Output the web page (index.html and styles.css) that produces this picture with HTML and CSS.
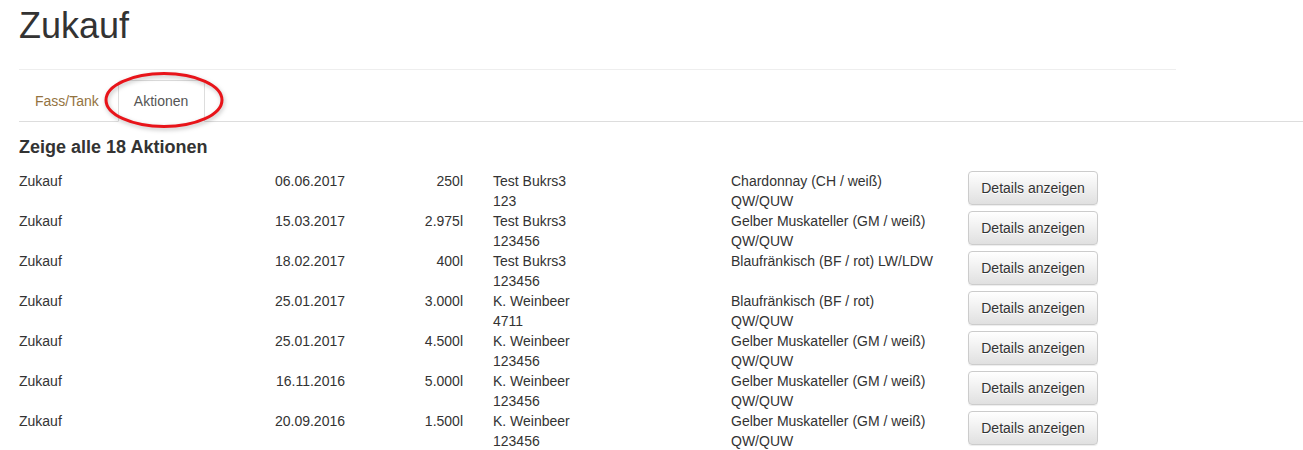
FILE: index.html
```html
<!DOCTYPE html>
<html lang="de">
<head>
<meta charset="utf-8">
<title>Zukauf</title>
<link rel="stylesheet" href="styles.css">
</head>
<body>
<div class="page">
  <div class="page-header"><h1>Zukauf</h1></div>
  <ul class="tabs">
    <li><a class="tab" href="#">Fass/Tank</a></li>
    <li class="active-wrap"><a class="tab active" href="#">Aktionen</a>
      <svg class="marker" width="124" height="62" viewBox="0 0 124 62"><ellipse cx="62" cy="31" rx="58" ry="26.5" fill="none" stroke="#e8141a" stroke-width="3"/></svg>
    </li>
  </ul>
  <h4 class="count">Zeige alle 18 Aktionen</h4>
  <div class="list">
    <div class="row"><div>Zukauf</div><div class="r">06.06.2017</div><div class="r">250l</div><div class="name">Test Bukrs3<br>123</div><div>Chardonnay (CH / weiß)<br>QW/QUW</div><div><button class="btn">Details anzeigen</button></div></div>
    <div class="row"><div>Zukauf</div><div class="r">15.03.2017</div><div class="r">2.975l</div><div class="name">Test Bukrs3<br>123456</div><div>Gelber Muskateller (GM / weiß)<br>QW/QUW</div><div><button class="btn">Details anzeigen</button></div></div>
    <div class="row"><div>Zukauf</div><div class="r">18.02.2017</div><div class="r">400l</div><div class="name">Test Bukrs3<br>123456</div><div>Blaufränkisch (BF / rot) LW/LDW</div><div><button class="btn">Details anzeigen</button></div></div>
    <div class="row"><div>Zukauf</div><div class="r">25.01.2017</div><div class="r">3.000l</div><div class="name">K. Weinbeer<br>4711</div><div>Blaufränkisch (BF / rot)<br>QW/QUW</div><div><button class="btn">Details anzeigen</button></div></div>
    <div class="row"><div>Zukauf</div><div class="r">25.01.2017</div><div class="r">4.500l</div><div class="name">K. Weinbeer<br>123456</div><div>Gelber Muskateller (GM / weiß)<br>QW/QUW</div><div><button class="btn">Details anzeigen</button></div></div>
    <div class="row"><div>Zukauf</div><div class="r">16.11.2016</div><div class="r">5.000l</div><div class="name">K. Weinbeer<br>123456</div><div>Gelber Muskateller (GM / weiß)<br>QW/QUW</div><div><button class="btn">Details anzeigen</button></div></div>
    <div class="row"><div>Zukauf</div><div class="r">20.09.2016</div><div class="r">1.500l</div><div class="name">K. Weinbeer<br>123456</div><div>Gelber Muskateller (GM / weiß)<br>QW/QUW</div><div><button class="btn">Details anzeigen</button></div></div>
  </div>
</div>
</body>
</html>
```
FILE: styles.css
```css
* { box-sizing: border-box; }
html, body { margin: 0; padding: 0; background: #fff; }
body {
  font-family: "Liberation Sans", Arial, sans-serif;
  font-size: 14px;
  line-height: 20px;
  color: #333;
}
.page { padding-left: 19px; }
.page-header {
  width: 1157px;
  height: 70px;
  border-bottom: 1px solid #eee;
  padding-top: 6px;
}
.page-header h1 {
  margin: 0;
  font-size: 36px;
  font-weight: 500;
  line-height: 39.6px;
  color: #333;
}
.tabs {
  list-style: none;
  margin: 10px 0 0;
  padding: 0;
  display: flex;
  border-bottom: 1px solid #ddd;
  height: 42px;
}
.tabs li { margin-bottom: -1px; position: relative; }
.tab {
  display: block;
  padding: 10px 15px;
  margin-right: 2px;
  border: 1px solid transparent;
  border-radius: 4px 4px 0 0;
  text-decoration: none;
  color: #94733f;
  line-height: 20px;
}
.tabs li:first-child .tab { margin-right: 3px; }
.tab.active {
  color: #555;
  background: #fff;
  border-color: #ddd #ddd transparent;
  padding: 10px 16px 10px 15px;
}
.marker {
  position: absolute;
  left: -16px;
  top: -11px;
  overflow: visible;
  filter: drop-shadow(1px 2px 2px rgba(0,0,0,0.25));
}
.count {
  margin: 16px 0 13px;
  font-size: 18px;
  line-height: 19.8px;
  font-weight: bold;
  color: #333;
}
.row {
  display: grid;
  grid-template-columns: 200px 126px 118px 268px 237px auto;
  height: 40px;
}
.r { text-align: right; }
.name { padding-left: 30px; }
.btn {
  font-family: "Liberation Sans", Arial, sans-serif;
  font-size: 14px;
  line-height: 20px;
  color: #333;
  padding: 6px 12px;
  height: 34px;
  width: 130px;
  border: 1px solid #ccc;
  border-radius: 4px;
  background: linear-gradient(to bottom, #fff 0, #e0e0e0 100%);
  text-shadow: 0 1px 0 #fff;
  box-shadow: inset 0 1px 0 rgba(255,255,255,.15), 0 1px 1px rgba(0,0,0,.075);
  cursor: pointer;
}
```
